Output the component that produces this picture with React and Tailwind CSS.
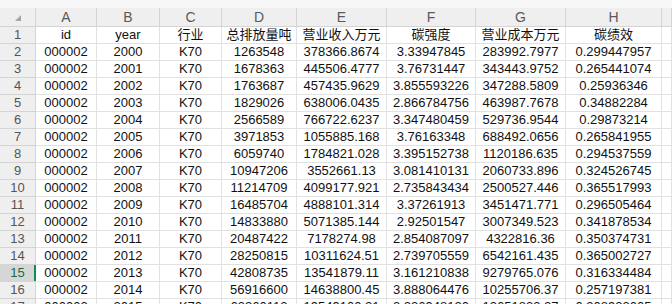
const cols = ["A", "B", "C", "D", "E", "F", "G", "H", ""];
const widths = ["w-[61px]", "w-[63px]", "w-[62px]", "w-[75px]", "w-[90px]", "w-[89px]", "w-[90px]", "w-[96px]", "flex-1"];

const rows = [
  ["id", "year", "行业", "总排放量吨", "营业收入万元", "碳强度", "营业成本万元", "碳绩效"],
  ["000002", "2000", "K70", "1263548", "378366.8674", "3.33947845", "283992.7977", "0.299447957"],
  ["000002", "2001", "K70", "1678363", "445506.4777", "3.76731447", "343443.9752", "0.265441074"],
  ["000002", "2002", "K70", "1763687", "457435.9629", "3.855593226", "347288.5809", "0.25936346"],
  ["000002", "2003", "K70", "1829026", "638006.0435", "2.866784756", "463987.7678", "0.34882284"],
  ["000002", "2004", "K70", "2566589", "766722.6237", "3.347480459", "529736.9544", "0.29873214"],
  ["000002", "2005", "K70", "3971853", "1055885.168", "3.76163348", "688492.0656", "0.265841955"],
  ["000002", "2006", "K70", "6059740", "1784821.028", "3.395152738", "1120186.635", "0.294537559"],
  ["000002", "2007", "K70", "10947206", "3552661.13", "3.081410131", "2060733.896", "0.324526745"],
  ["000002", "2008", "K70", "11214709", "4099177.921", "2.735843434", "2500527.446", "0.365517993"],
  ["000002", "2009", "K70", "16485704", "4888101.314", "3.37261913", "3451471.771", "0.296505464"],
  ["000002", "2010", "K70", "14833880", "5071385.144", "2.92501547", "3007349.523", "0.341878534"],
  ["000002", "2011", "K70", "20487422", "7178274.98", "2.854087097", "4322816.36", "0.350374731"],
  ["000002", "2012", "K70", "28250815", "10311624.51", "2.739705559", "6542161.435", "0.365002727"],
  ["000002", "2013", "K70", "42808735", "13541879.11", "3.161210838", "9279765.076", "0.316334484"],
  ["000002", "2014", "K70", "56916600", "14638800.45", "3.888064476", "10255706.37", "0.257197381"],
  ["000002", "2015", "K70", "63260113", "19549100.21", "3.236948120", "13651833.27", "0.308933005"],
];

export default function App() {
  return (
    <div className="w-[672px] h-[304px] overflow-hidden bg-white font-['Liberation_Sans','Noto_Sans_CJK_SC',sans-serif] text-[13px] text-[#111]">
      <div className="h-[8px] bg-[#f7f7f7]" />
      <div className="flex h-[19px] bg-[#efefef] border-b border-[#d4d4d4]">
        <div className="w-[36px] border-r border-[#d4d4d4] flex items-end justify-end pr-[14px] pb-[5px]">
          <svg width="6" height="6" viewBox="0 0 6 6">
            <path d="M6 0 L6 6 L0 6 Z" fill="#a6a6a6" />
          </svg>
        </div>
        {cols.map((c, i) => (
          <div key={i} className={`${widths[i]} border-r border-[#d4d4d4] flex items-center justify-center text-[14px] text-[#5a5a5a]`}>
            {c}
          </div>
        ))}
      </div>
      {rows.map((r, ri) => {
        const active = ri === 14;
        return (
          <div key={ri} className="flex h-[17px]">
            <div className={`w-[36px] relative border-r border-b border-[#d4d4d4] flex items-center justify-center ${active ? "bg-[#d6d6d6] text-[#1b6b45]" : "bg-[#efefef] text-[#555]"}`}>
              {ri + 1}
              {active && <div className="absolute right-[-1px] top-0 bottom-0 w-[2px] bg-[#138a5a]" />}
            </div>
            {widths.map((w, ci) => (
              <div key={ci} className={`${w} border-r border-b border-[#e1e1e1] flex items-center justify-center whitespace-nowrap overflow-hidden`}>
                {r[ci] || ""}
              </div>
            ))}
          </div>
        );
      })}
    </div>
  );
}
